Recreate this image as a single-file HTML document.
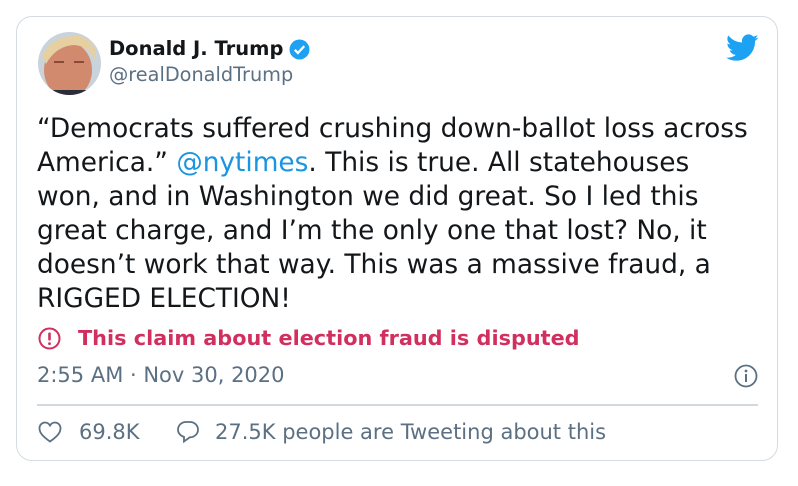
<!DOCTYPE html>
<html><head><meta charset="utf-8"><style>
body{margin:0;width:798px;height:486px;background:#fff;font-family:"DejaVu Sans","Liberation Sans",sans-serif;position:relative;overflow:hidden}
.card{position:absolute;left:16px;top:16px;width:762px;height:445px;border:1.5px solid #d5dbe0;border-radius:16px;box-sizing:border-box}
.a{position:absolute;white-space:nowrap}
</style></head><body>
<div class="card"></div>
<svg class="a" style="left:38px;top:32px" width="63" height="63" viewBox="0 0 63 63">
<defs><clipPath id="c"><circle cx="31.5" cy="31.5" r="31.5"/></clipPath></defs>
<g clip-path="url(#c)">
<rect width="63" height="63" fill="#c9d3dc"/>
<ellipse cx="30" cy="38" rx="24" ry="28" fill="#d28a6e"/>
<path d="M4 24 Q14 2 42 4 Q60 10 58 30 Q52 14 36 13 Q18 14 8 32Z" fill="#e6cfa0"/>
<path d="M16 30 h10 M36 30 h10" stroke="#8a4a3a" stroke-width="2"/>
<rect x="0" y="58" width="63" height="8" fill="#2a2d3a"/>
</g></svg>
<div class="a" style="left:109px;top:37px;font-size:19.5px;font-weight:bold;color:#14171a">Donald J. Trump</div>
<svg class="a" style="left:289px;top:39px" width="21" height="21" viewBox="0 0 20 20"><circle cx="10" cy="10" r="9.5" fill="#1da1f2"/><path d="M5.5 10.3l3 3 6-6.5" stroke="#fff" stroke-width="2.2" fill="none"/></svg>
<div class="a" style="left:109px;top:63px;font-size:19.3px;color:#5b7083">@realDonaldTrump</div>
<svg class="a" style="left:726px;top:34px" width="33" height="28" viewBox="0 0 24 20"><path fill="#1da1f2" d="M23.6 2.4c-.9.4-1.8.6-2.8.8 1-.6 1.8-1.6 2.1-2.7-.9.6-2 1-3.1 1.2C19 .7 17.7.1 16.4.1c-2.7 0-4.8 2.2-4.800 4.8 0 .4 0 .8.1 1.1C7.7 5.8 4.1 3.900 1.7.9c-.4.7-.7 1.6-.7 2.4 0 1.7.9 3.2 2.2 4-.8 0-1.5-.2-2.2-.6v.1c0 2.3 1.7 4.3 3.9 4.7-.4.1-.8.2-1.3.2-.3 0-.6 0-.9-.1.6 1.9 2.4 3.3 4.5 3.4-1.7 1.3-3.8 2.1-6 2.1-.4 0-.8 0-1.2-.1 2.1 1.4 4.7 2.2 7.4 2.2 8.9 0 13.7-7.4 13.7-13.7v-.6c1-.7 1.8-1.6 2.5-2.5z"/></svg>
<div class="a" style="left:37px;top:112px;font-size:26.4px;line-height:34px;color:#14171a">“Democrats suffered crushing down-ballot loss across<br>America.” <span style="color:#1b95e0">@nytimes</span>. This is true. All statehouses<br>won, and in Washington we did great. So I led this<br>great charge, and I’m the only one that lost? No, it<br>doesn’t work that way. This was a massive fraud, a<br>RIGGED ELECTION!</div>
<svg class="a" style="left:38px;top:327px" width="23" height="23" viewBox="0 0 23 23"><circle cx="11.5" cy="11.5" r="10" stroke="#d12f5e" stroke-width="2" fill="none"/><rect x="10.2" y="5.5" width="2.6" height="8" rx="1" fill="#d12f5e"/><circle cx="11.5" cy="16.6" r="1.4" fill="#d12f5e"/></svg>
<div class="a" style="left:78px;top:326px;font-size:20.8px;font-weight:bold;color:#d12f5e">This claim about election fraud is disputed</div>
<div class="a" style="left:37px;top:363px;font-size:21px;color:#5b7083">2:55 AM · Nov 30, 2020</div>
<svg class="a" style="left:734px;top:364px" width="24" height="24" viewBox="0 0 24 24"><circle cx="12" cy="12" r="10.5" stroke="#5b7083" stroke-width="1.8" fill="none"/><circle cx="12" cy="7" r="1.4" fill="#5b7083"/><rect x="11" y="10" width="2" height="8" fill="#5b7083"/></svg>
<div class="a" style="left:37px;top:404px;width:721px;height:1.5px;background:#cfd9de"></div>
<svg class="a" style="left:38px;top:421px" width="24" height="22" viewBox="0 0 24 22"><path d="M12 20.5C5 15.5 1.5 12 1.5 7.2 1.5 4 4 1.5 7 1.5c2.2 0 4 1.3 5 3 1-1.7 2.8-3 5-3 3 0 5.5 2.5 5.5 5.7 0 4.8-3.5 8.3-10.5 13.3z" stroke="#5b7083" stroke-width="1.8" fill="none"/></svg>
<div class="a" style="left:79px;top:420px;font-size:21px;color:#5b7083">69.8K</div>
<svg class="a" style="left:176px;top:420px" width="24" height="24" viewBox="0 0 24 24"><path d="M10 2h4c4.5 0 8 3.4 8 7.7 0 4.3-3.8 7.6-8.2 7.6L8 21.5v-4.6C4.5 16 2 13 2 9.7 2 5.4 5.5 2 10 2z" stroke="#5b7083" stroke-width="1.8" fill="none"/></svg>
<div class="a" style="left:215px;top:420px;font-size:21px;color:#5b7083">27.5K people are Tweeting about this</div>
</body></html>
